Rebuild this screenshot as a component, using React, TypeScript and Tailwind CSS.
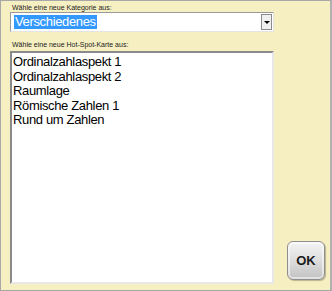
const items = ["Ordinalzahlaspekt 1", "Ordinalzahlaspekt 2", "Raumlage", "Römische Zahlen 1", "Rund um Zahlen"];

export default function App() {
  return (
    <div className="w-[332px] h-[291px] bg-[#f6efc1] border border-[#a8a8a8] border-r-2 border-r-[#b0b0b0] flex font-['Liberation_Sans',Arial,sans-serif]">
      <div className="w-[264px] ml-[9px] flex flex-col">
        <p className="text-[7px] leading-[9px] text-[#222] mt-[2px] ml-[2px]">Wähle eine neue Kategorie aus:</p>
        <div className="h-[20px] bg-white border border-t-[#9a9a9a] border-l-[#9a9a9a] border-b-[#e4e4e4] border-r-[#e4e4e4] flex items-center pl-[3px] pr-[1px]">
          <span className="bg-[#3399ff] text-white text-[13px] tracking-[-0.35px] leading-[14px] px-[1px]">Verschiedenes</span>
          <div className="ml-auto w-[11px] h-[16px] bg-[#f0f0f0] border border-[#8c8c8c] flex items-center justify-center">
            <div className="w-0 h-0 border-l-[3px] border-r-[3px] border-t-[3px] border-l-transparent border-r-transparent border-t-black" />
          </div>
        </div>
        <p className="text-[7px] leading-[9px] text-[#222] mt-[8px] ml-[2px]">Wähle eine neue Hot-Spot-Karte aus:</p>
        <div className="mt-[2px] h-[233px] bg-white border-2 border-t-[#8a8a8a] border-l-[#8a8a8a] border-b-[#e8e8e8] border-r-[#e8e8e8] pt-[2px] pl-[1px]">
          {items.map((it) => (
            <div key={it} className="text-[13px] tracking-[-0.35px] leading-[14.5px] text-black">
              {it}
            </div>
          ))}
        </div>
      </div>
      <div className="flex-1 flex flex-col justify-end items-center pb-[10px] pl-[8px]">
        <button className="w-[38px] h-[39px] rounded-[6px] border border-[#8e8e8e] bg-gradient-to-b from-[#f4f4f4] via-[#dedede] to-[#c2c2c2] shadow-[inset_0_0_0_2px_rgba(255,255,255,0.5),1px_1px_1px_rgba(0,0,0,0.25)] flex items-center justify-center">
          <span className="text-[13px] font-bold text-[#1a1a1a]">OK</span>
        </button>
      </div>
    </div>
  );
}
